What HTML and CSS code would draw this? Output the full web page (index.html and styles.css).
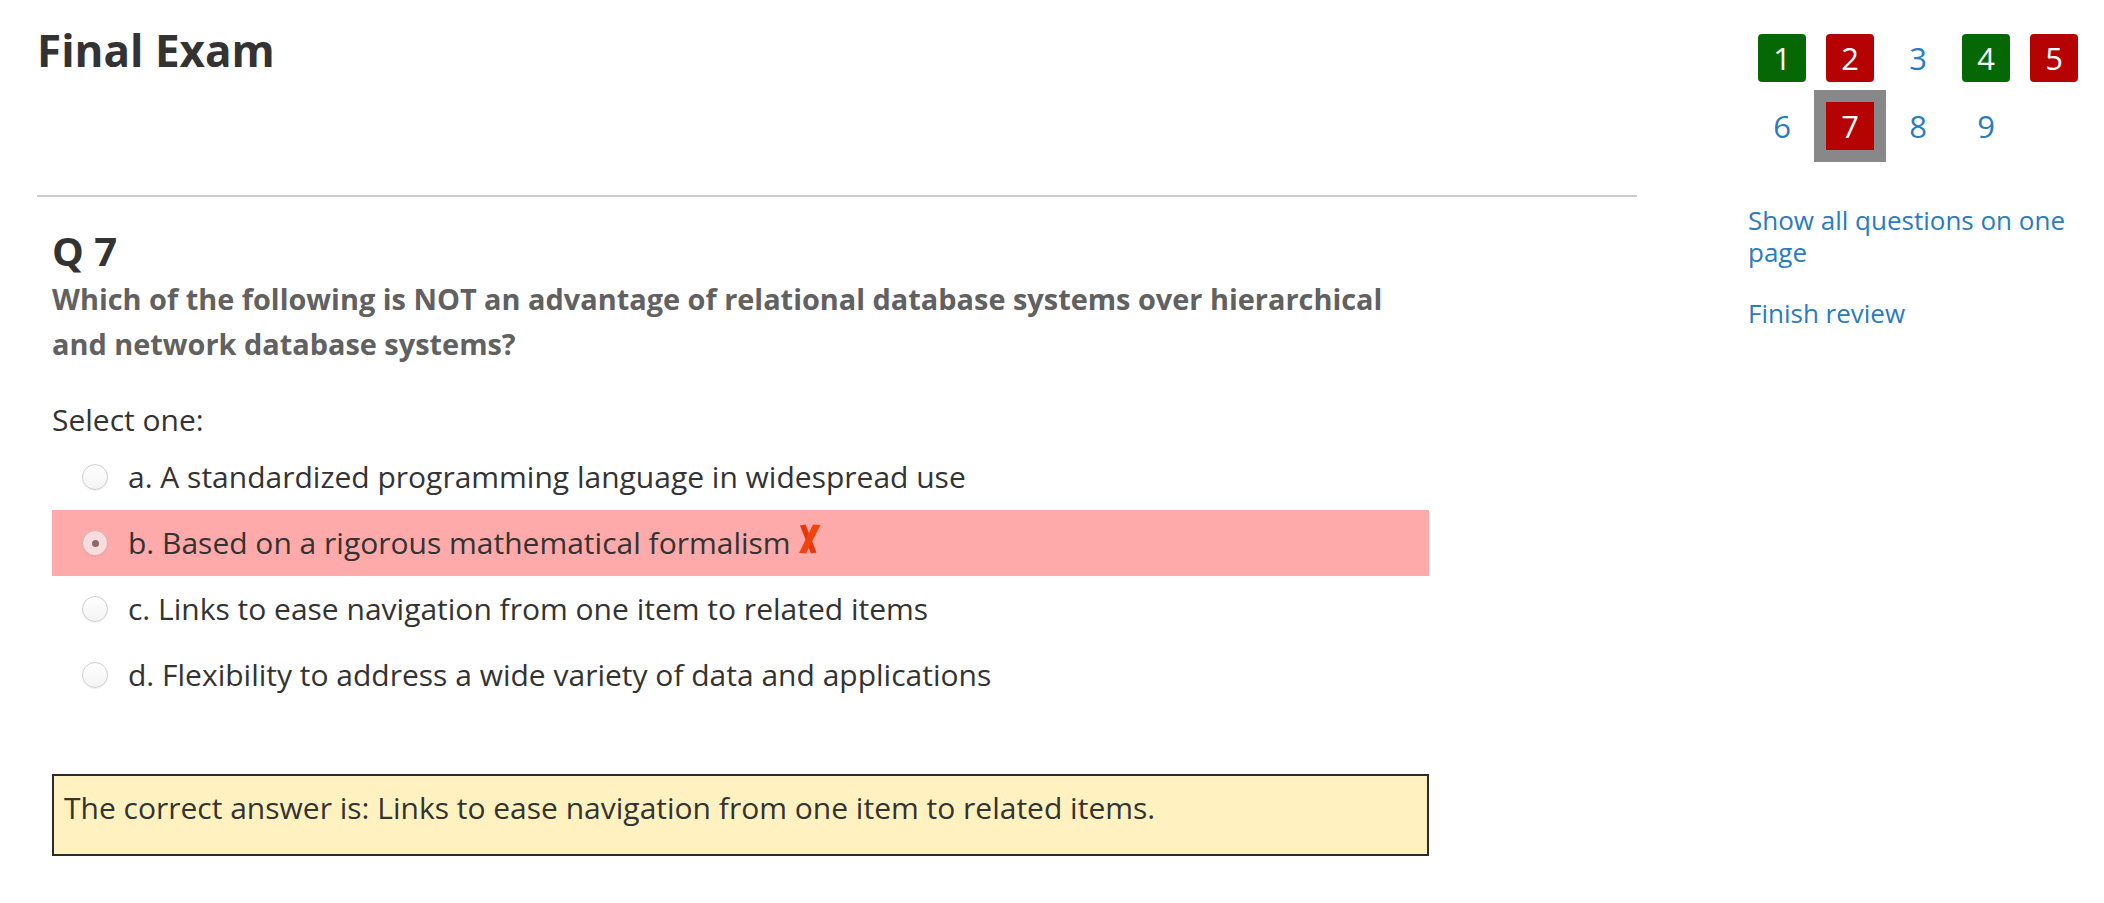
FILE: index.html
```html
<!DOCTYPE html>
<html lang="en">
<head>
<meta charset="utf-8">
<title>Final Exam</title>
<link rel="stylesheet" href="styles.css">
</head>
<body>
<div class="page">
  <main class="main">
    <h1 class="title">Final Exam</h1>
    <hr class="divider">
    <section class="question">
      <h2 class="qno">Q 7</h2>
      <div class="qtext">Which of the following is NOT an advantage of relational database systems over hierarchical and network database systems?</div>
      <div class="prompt">Select one:</div>
      <div class="answers">
        <div class="option"><span class="radio"></span><span class="label">a. A standardized programming language in widespread use</span></div>
        <div class="option incorrect"><span class="radio checked"></span><span class="label">b. Based on a rigorous mathematical formalism</span><svg class="xmark" viewBox="0 0 24 30" width="24" height="30" aria-hidden="true"><path d="M3 1.5 L8.5 0.5 L19.5 28.5 L14 29.5 Z" fill="#e8360c"/><path d="M16 0.5 L23.5 1 L9 29.5 L2 29 Z" fill="#f2430f"/></svg></div>
        <div class="option"><span class="radio"></span><span class="label">c. Links to ease navigation from one item to related items</span></div>
        <div class="option"><span class="radio"></span><span class="label">d. Flexibility to address a wide variety of data and applications</span></div>
      </div>
      <div class="feedback">The correct answer is: Links to ease navigation from one item to related items.</div>
    </section>
  </main>
  <aside class="sidebar">
    <div class="qnav">
      <span class="qbtn correct">1</span>
      <span class="qbtn wrong">2</span>
      <span class="qbtn plain">3</span>
      <span class="qbtn correct">4</span>
      <span class="qbtn wrong">5</span>
      <span class="qbtn plain">6</span>
      <span class="qbtn wrong current">7</span>
      <span class="qbtn plain">8</span>
      <span class="qbtn plain">9</span>
    </div>
    <a class="navlink first" href="#">Show all questions on one page</a>
    <a class="navlink" href="#">Finish review</a>
  </aside>
</div>
</body>
</html>
```

FILE: styles.css
```css
html, body {
  margin: 0;
  padding: 0;
  background: #ffffff;
}

body {
  font-family: "Open Sans", "Liberation Sans", sans-serif;
  color: #333333;
}

.page {
  display: flex;
  align-items: flex-start;
  padding-left: 37px;
}

.main {
  width: 1600px;
  flex: none;
}

.title {
  margin: 0;
  padding-top: 24px;
  font-size: 44px;
  line-height: 52px;
  font-weight: 700;
  color: #333333;
}

.divider {
  margin: 119px 0 0 0;
  height: 2px;
  border: 0;
  background: #cccccc;
}

.question {
  padding-left: 15px;
  width: 1377px;
}

.qno {
  margin: 30px 0 0 0;
  font-size: 40px;
  line-height: 48px;
  font-weight: 700;
  color: #333333;
}

.qtext {
  margin-top: 1px;
  max-width: 1352px;
  font-size: 28.9px;
  line-height: 45px;
  font-weight: 700;
  color: #616161;
}

.prompt {
  margin-top: 34px;
  font-size: 30px;
  line-height: 40px;
}

.answers {
  margin-top: 4px;
}

.option {
  display: flex;
  align-items: center;
  height: 66px;
  font-size: 30px;
  line-height: 40px;
}

.option.incorrect {
  background: #ffaaaa;
}

.radio {
  flex: none;
  box-sizing: border-box;
  width: 26px;
  height: 26px;
  margin-left: 30px;
  margin-right: 20px;
  border-radius: 50%;
  border: 1px solid #cfcfcf;
  background: linear-gradient(#ffffff, #f3f3f3);
  box-shadow: 0 1px 1px rgba(0, 0, 0, 0.06);
  display: flex;
  align-items: center;
  justify-content: center;
}

.radio.checked {
  background: #fbdcdc;
  border-color: #d9b2b2;
}

.radio.checked::after {
  content: "";
  width: 7px;
  height: 7px;
  border-radius: 50%;
  background: #8a6a6a;
}

.xmark {
  flex: none;
  margin-left: 6px;
  margin-top: -8px;
}

.feedback {
  margin-top: 66px;
  border: 2px solid #2b2b2b;
  background: #fff2c0;
  padding: 12px 10px 26px 10px;
  font-size: 30px;
  line-height: 40px;
}

.sidebar {
  margin-left: 111px;
  width: 340px;
  flex: none;
  display: flex;
  flex-direction: column;
  align-items: flex-start;
}

.qnav {
  padding-top: 34px;
  padding-left: 10px;
  display: grid;
  grid-template-columns: repeat(5, 48px);
  grid-auto-rows: 48px;
  column-gap: 20px;
  row-gap: 20px;
}

.qbtn {
  display: flex;
  align-items: center;
  justify-content: center;
  font-size: 31px;
  line-height: 1;
  border-radius: 4px;
  color: #ffffff;
}

.qbtn.correct {
  background: #056805;
}

.qbtn.wrong {
  background: #b50303;
}

.qbtn.plain {
  color: #2a7bbf;
}

.qbtn.current {
  border-radius: 0;
  box-shadow: 0 0 0 12px #888888;
}

.navlink {
  display: block;
  font-size: 26px;
  line-height: 32px;
  color: #2a7bbf;
  text-decoration: none;
}

.navlink.first {
  margin-top: 54px;
}

.navlink + .navlink {
  margin-top: 29px;
}
```
